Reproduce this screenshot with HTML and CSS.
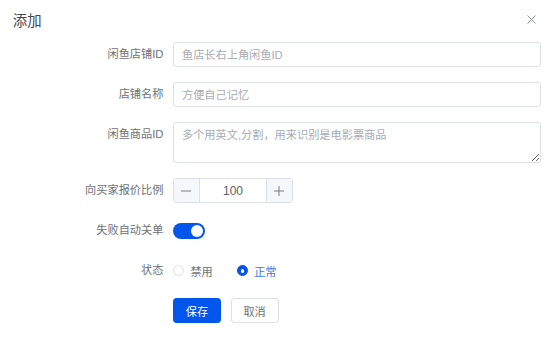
FILE: index.html
```html
<!DOCTYPE html>
<html lang="zh-CN">
<head>
    <meta charset="UTF-8">
    <meta name="viewport" content="width=device-width, initial-scale=1.0">
    <title>添加</title>
    <link rel="stylesheet" href="styles.css">
</head>
<body>
    <div class="dialog">
        <header class="dialog-header">
            <span class="dialog-title">添加</span>
            <button class="dialog-close" type="button" aria-label="关闭">
                <svg width="9" height="9" viewBox="0 0 9 9">
                    <path d="M0.5 0.5 L8.5 8.5 M8.5 0.5 L0.5 8.5" stroke="#909399" stroke-width="1" fill="none"/>
                </svg>
            </button>
        </header>
        <form class="form">
            <div class="form-item">
                <label class="form-label">闲鱼店铺ID</label>
                <div class="form-content">
                    <input class="input" type="text" placeholder="鱼店长右上角闲鱼ID">
                </div>
            </div>
            <div class="form-item">
                <label class="form-label">店铺名称</label>
                <div class="form-content">
                    <input class="input" type="text" placeholder="方便自己记忆">
                </div>
            </div>
            <div class="form-item">
                <label class="form-label">闲鱼商品ID</label>
                <div class="form-content">
                    <textarea class="textarea" placeholder="多个用英文,分割，用来识别是电影票商品"></textarea>
                </div>
            </div>
            <div class="form-item">
                <label class="form-label">向买家报价比例</label>
                <div class="form-content">
                    <div class="number">
                        <span class="number-btn number-minus">
                            <svg width="10" height="10" viewBox="0 0 10 10"><path d="M0 5 H10" stroke="#7a7d83" stroke-width="1"/></svg>
                        </span>
                        <input class="number-input" type="text" value="100">
                        <span class="number-btn number-plus">
                            <svg width="10" height="10" viewBox="0 0 10 10"><path d="M0 5 H10 M5 0 V10" stroke="#7a7d83" stroke-width="1"/></svg>
                        </span>
                    </div>
                </div>
            </div>
            <div class="form-item">
                <label class="form-label">失败自动关单</label>
                <div class="form-content">
                    <span class="switch is-on"><span class="switch-knob"></span></span>
                </div>
            </div>
            <div class="form-item">
                <label class="form-label">状态</label>
                <div class="form-content">
                    <label class="radio">
                        <span class="radio-circle"></span>
                        <span class="radio-text">禁用</span>
                    </label>
                    <label class="radio is-checked">
                        <span class="radio-circle"></span>
                        <span class="radio-text">正常</span>
                    </label>
                </div>
            </div>
            <div class="form-item">
                <span class="form-label"></span>
                <div class="form-content">
                    <button class="btn btn-primary" type="button">保存</button>
                    <button class="btn" type="button">取消</button>
                </div>
            </div>
        </form>
    </div>
</body>
</html>
```

FILE: styles.css
```css
body {
    margin: 0;
    background: #fff;
    font-family: "Liberation Sans", "Noto Sans CJK SC", sans-serif;
    color: #606266;
}
.dialog {
    width: 554px;
    height: 348px;
    background: #fff;
}
.dialog-header {
    display: flex;
    justify-content: space-between;
    align-items: flex-start;
    padding: 12.8px 18px 13.5px 12.8px;
}
.dialog-title {
    font-size: 14.4px;
    line-height: 16px;
    color: #45474b;
}
.dialog-close {
    margin-top: 2px;
    padding: 0;
    border: none;
    background: none;
    width: 9px;
    height: 9px;
    display: flex;
}
.form {
    padding: 0 13px 0 12.8px;
}
.form-item {
    display: flex;
    margin-bottom: 15px;
    font-size: 11.2px;
}
.form-label {
    width: 160.2px;
    flex: none;
    box-sizing: border-box;
    padding-right: 9.6px;
    text-align: right;
    line-height: 25px;
    color: #6e7176;
}
.form-content {
    flex: 1;
    display: flex;
    align-items: center;
    min-height: 25px;
}
.input,
.textarea {
    width: 100%;
    box-sizing: border-box;
    border: 1px solid #dcdfe6;
    border-radius: 3.2px;
    font-family: inherit;
    font-size: 11.2px;
    color: #606266;
    outline: none;
}
.input {
    height: 25px;
    padding: 0 8px;
}
.textarea {
    height: 41px;
    padding: 4px 8px;
    line-height: 1.5;
    resize: vertical;
    display: block;
}
.input::placeholder,
.textarea::placeholder {
    color: #a8abb2;
}
.number {
    display: flex;
    width: 120px;
    height: 25px;
    box-sizing: border-box;
    border: 1px solid #dcdfe6;
    border-radius: 3.2px;
    overflow: hidden;
}
.number-btn {
    width: 25px;
    flex: none;
    display: flex;
    align-items: center;
    justify-content: center;
    background: #f5f7fa;
}
.number-minus {
    border-right: 1px solid #dcdfe6;
}
.number-plus {
    border-left: 1px solid #dcdfe6;
}
.number-input {
    flex: 1;
    min-width: 0;
    border: none;
    outline: none;
    padding: 0;
    text-align: center;
    font-family: inherit;
    font-size: 12px;
    color: #606266;
}
.switch {
    display: flex;
    align-items: center;
    width: 32px;
    height: 16px;
    box-sizing: border-box;
    padding: 2px;
    border-radius: 8px;
    background: #dcdfe6;
}
.switch.is-on {
    background: #0256ec;
    justify-content: flex-end;
}
.switch-knob {
    width: 12px;
    height: 12px;
    border-radius: 50%;
    background: #fff;
}
.radio {
    display: flex;
    align-items: center;
    margin-right: 24px;
    color: #6e7176;
}
.radio-circle {
    width: 11px;
    height: 11px;
    box-sizing: border-box;
    border: 1px solid #dcdfe6;
    border-radius: 50%;
    background: #fff;
    display: flex;
    align-items: center;
    justify-content: center;
}
.radio-text {
    margin-left: 6.4px;
}
.radio.is-checked {
    color: #3a76f0;
}
.radio.is-checked .radio-circle {
    border-color: #0256ec;
    background: #0256ec;
}
.radio.is-checked .radio-circle::after {
    content: "";
    width: 3.5px;
    height: 3.5px;
    border-radius: 50%;
    background: #fff;
}
.btn {
    width: 48px;
    height: 25px;
    margin-right: 9.6px;
    padding: 0;
    border: 1px solid #dcdfe6;
    border-radius: 3.2px;
    background: #fff;
    font-family: inherit;
    font-size: 11.2px;
    color: #6e7176;
}
.btn-primary {
    border-color: #0256ec;
    background: #0256ec;
    color: #fff;
}
```
